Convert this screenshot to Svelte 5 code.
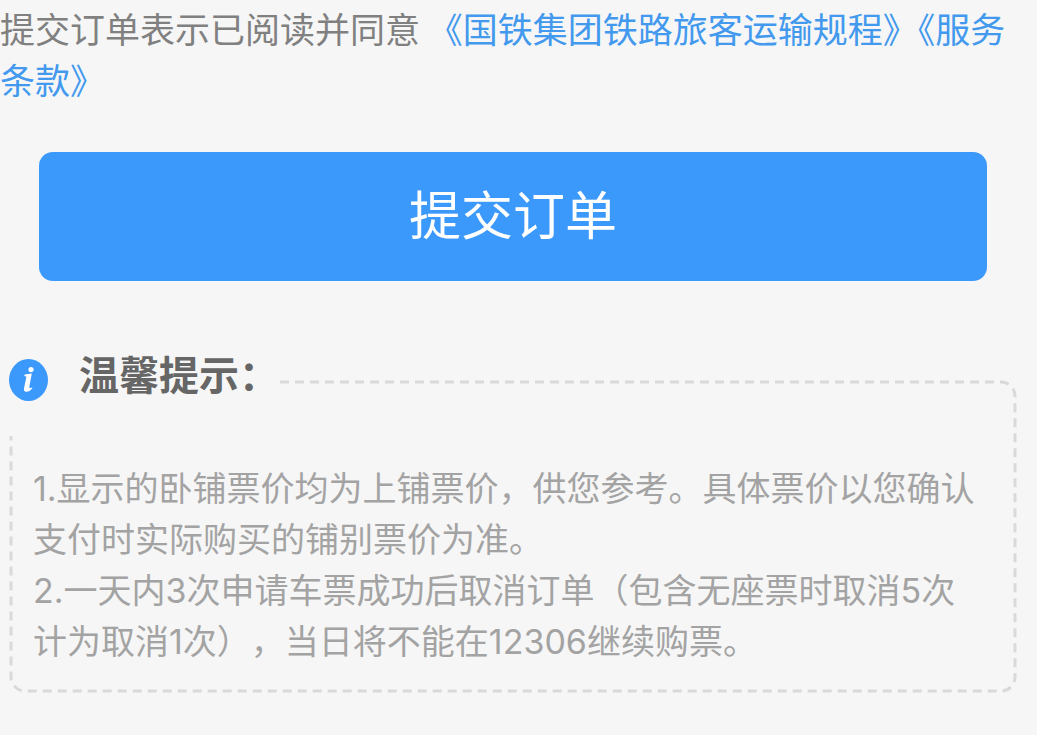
<script lang="ts">
	const rules = [
		{ label: '《国铁集团铁路旅客运输规程》', href: '#transport' },
		{ label: '《服务条款》', href: '#terms' }
	];

	const tips = [
		'1.显示的卧铺票价均为上铺票价，供您参考。具体票价以您确认支付时实际购买的铺别票价为准。',
		'2.一天内3次申请车票成功后取消订单（包含无座票时取消5次计为取消1次），当日将不能在12306继续购票。'
	];

	let submitted = $state(false);

	function submitOrder(): void {
		submitted = true;
	}
</script>

<main class="order">
	<p class="order__agreement">
		提交订单表示已阅读并同意
		{#each rules as rule}<a href={rule.href}>{rule.label}</a>{/each}
	</p>

	<button class="order__submit" type="button" disabled={submitted} onclick={submitOrder}>提交订单</button>

	<section class="tips" aria-labelledby="tips-title">
		<svg class="tips__frame" aria-hidden="true">
			<rect x="2" y="2" rx="14" />
		</svg>
		<header class="tips__header">
			<svg class="tips__icon" viewBox="0 0 40 42" aria-hidden="true">
				<ellipse cx="19.5" cy="21" rx="19.5" ry="21" fill="#3b99fc" />
				<circle cx="22" cy="10.6" r="2.6" fill="#fff" />
				<path d="M15.6 15.6 L22.8 14.6 L20.4 27.6 Q20.2 30.4 22.8 28.4 L23.4 29.2 Q20.6 32.8 17.4 32.8 Q14.4 32.8 15 29.6 L17.4 17.8 L15.4 17 Z" fill="#fff" />
			</svg>
			<h2 id="tips-title">温馨提示：</h2>
		</header>
		<div class="tips__body">
			{#each tips as tip}
				<p>{tip}</p>
			{/each}
		</div>
	</section>
</main>

<style>
	:global(body) {
		margin: 0;
		background: #f6f6f6;
	}

	.order {
		font-family: Inter, 'Noto Sans CJK SC', sans-serif;
		color: #a3a3a3;
	}

	.order__agreement {
		margin: 0;
		padding-top: 2px;
		font-family: 'Noto Sans CJK SC', sans-serif;
		font-size: 35px;
		line-height: 51px;
		color: #808080;
	}

	.order__agreement a {
		color: #4299ee;
		text-decoration: none;
	}

	.order__submit {
		display: block;
		width: calc(100% - 89px);
		height: 129px;
		margin: 48px 50px 0 39px;
		padding: 0 0 8px;
		border: 0;
		border-radius: 14px;
		background: #3b99fc;
		color: #fff;
		font-family: 'Noto Sans CJK SC', sans-serif;
		font-size: 52px;
	}

	.tips {
		position: relative;
		margin: 69px 20px 0 9px;
		padding-bottom: 26px;
	}

	.tips__frame {
		position: absolute;
		top: 30px;
		left: 0;
		width: 100%;
		height: calc(100% - 30px);
	}

	.tips__frame rect {
		width: calc(100% - 4px);
		height: calc(100% - 4px);
		fill: none;
		stroke: #d9d9d9;
		stroke-width: 3px;
		stroke-dasharray: 9 6;
	}

	/* covers the top left corner of the dashed frame */
	.tips__header {
		position: relative;
		display: flex;
		align-items: flex-start;
		width: 270px;
		height: 86px;
		margin-bottom: 27px;
		background: #f6f6f6;
	}

	.tips__icon {
		width: 40px;
		height: 42px;
		margin: 9px 30px 0 0;
	}

	h2 {
		margin: 0;
		font-size: 40px;
		line-height: 52px;
		color: #666;
	}

	.tips__body {
		position: relative;
		padding: 0 36px 0 24px;
		font-size: 34px;
		line-height: 51px;
		text-spacing-trim: space-all;
	}

	.tips__body p {
		margin: 0;
	}
</style>
